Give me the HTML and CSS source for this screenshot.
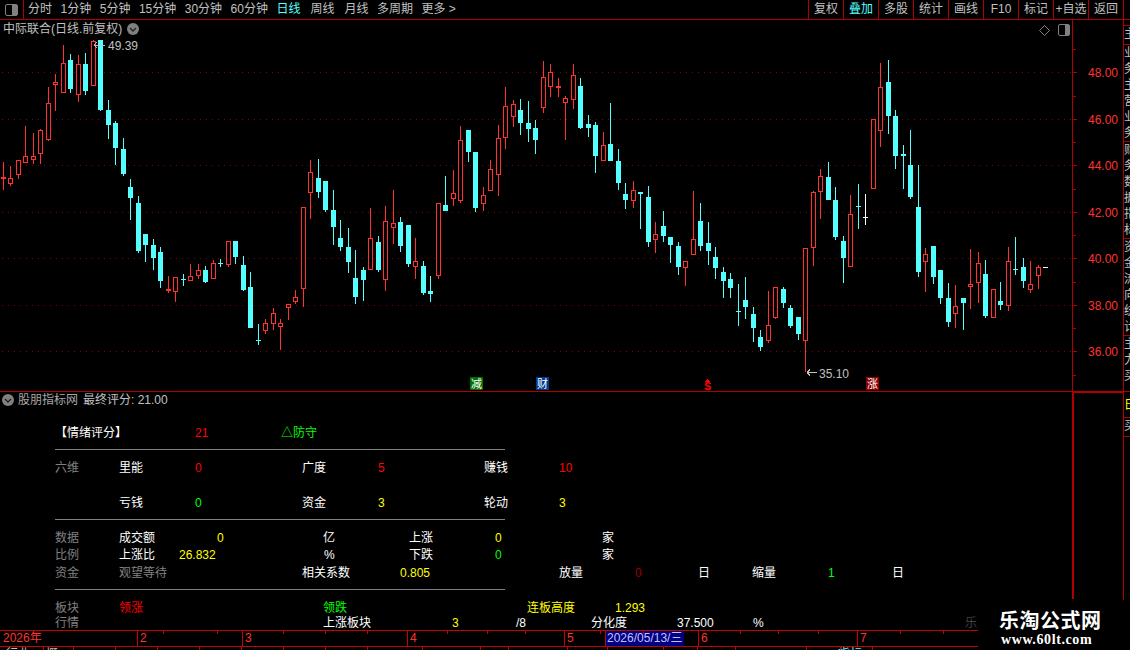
FILE: index.html
```html
<!DOCTYPE html>
<html lang="zh-CN">
<head>
    <meta charset="UTF-8">
    <title>中际联合 日线</title>
    <link rel="stylesheet" href="styles.css">
</head>
<body>
    <div class="screen">
        <div class="toolbar">
            <div class="panel-toggle"><span class="box-icon"></span></div>
            <div class="periods">
                <span>分时</span><span>1分钟</span><span>5分钟</span><span>15分钟</span><span>30分钟</span><span>60分钟</span>
                <span class="on">日线</span><span class="wide">周线</span><span class="wide">月线</span><span>多周期</span><span>更多 &gt;</span>
            </div>
            <div class="actions">
                <span>复权</span><span class="on">叠加</span><span>多股</span><span>统计</span><span>画线</span><span>F10</span><span>标记</span><span>+自选</span><span>返回</span>
            </div>
        </div>

        <div class="workspace">
            <div class="main">
                <div class="price-pane">
                    <div class="pane-title">
                        <span>中际联合(日线.前复权)</span>
                        <svg class="fold-icon" viewBox="0 0 12 12"><circle cx="6" cy="6" r="6" fill="#808080"/><path d="M3 5l3 3 3-3" fill="none" stroke="#222" stroke-width="1.4"/></svg>
                        <span class="pane-tools">
                            <svg class="diamond-icon" viewBox="0 0 11 11"><path d="M5.5 .5l5 5-5 5-5-5z" fill="none" stroke="#808080"/></svg>
                            <span class="box-icon small"></span>
                        </span>
                    </div>
                    <svg id="kline" class="kline" viewBox="0 20 1123 371"></svg>
                </div>

                <div class="indicator-pane">
                    <div class="indicator">
                        <div class="pane-title lower">
                            <svg class="fold-icon first" viewBox="0 0 12 12"><circle cx="6" cy="6" r="6" fill="#808080"/><path d="M3 5l3 3 3-3" fill="none" stroke="#222" stroke-width="1.4"/></svg>
                            <span class="source">股朋指标网</span>
                            <span>最终评分: 21.00</span>
                        </div>

                        <div class="row row-mood">
                            <span class="white">【情绪评分】</span><span class="red">21</span><span class="green">△防守</span>
                        </div>
                        <div class="rule"></div>
                        <div class="row row-six">
                            <span class="muted">六维</span><span class="white">里能</span><span class="red">0</span><span class="white">广度</span><span class="red">5</span><span class="white">赚钱</span><span class="red">10</span>
                        </div>
                        <div class="row row-six gap-wide">
                            <span></span><span class="white">亏钱</span><span class="green">0</span><span class="white">资金</span><span class="yellow">3</span><span class="white">轮动</span><span class="yellow">3</span>
                        </div>
                        <div class="rule"></div>
                        <div class="row row-data">
                            <span class="muted">数据</span><span class="white">成交额</span><span class="yellow">0</span><span class="white">亿</span><span class="white">上涨</span><span class="yellow">0</span><span class="white">家</span>
                        </div>
                        <div class="row row-ratio">
                            <span class="muted">比例</span><span class="white">上涨比</span><span class="yellow">26.832</span><span class="white">%</span><span class="white">下跌</span><span class="green">0</span><span class="white">家</span>
                        </div>
                        <div class="row row-fund">
                            <span class="muted">资金</span><span class="muted">观望等待</span><span class="white">相关系数</span><span class="yellow">0.805</span><span class="white">放量</span><span class="dark-red">0</span><span class="white">日</span><span class="white">缩量</span><span class="green">1</span><span class="white">日</span>
                        </div>
                        <div class="rule"></div>
                        <div class="row row-sector">
                            <span class="muted">板块</span><span class="red">领涨</span><span class="green">领跌</span><span class="yellow">连板高度</span><span class="yellow">1.293</span>
                        </div>
                        <div class="row row-market">
                            <span class="muted">行情</span><span class="white">上涨板块</span><span class="yellow">3</span><span class="white">/8</span><span class="white">分化度</span><span class="white">37.500</span><span class="white">%</span><span class="faint">乐</span>
                        </div>
                    </div>
                    <div class="indicator-axis"></div>
                </div>

                <div class="timeline">
                    <div class="months">
                        <span class="m-year">2026年</span><span class="m-feb">2</span><span class="m-mar">3</span><span class="m-apr">4</span>
                        <span class="m-may">5</span><span class="cursor-date">2026/05/13/三</span><span class="m-jun">6</span><span class="m-jul">7</span>
                    </div>
                    <div class="tabs"><span>行业</span><span>概</span><span class="on">指标</span></div>
                    <svg id="ticks" class="ticks" viewBox="0 0 978 20"></svg>
                </div>
            </div>

            <div class="side">
                <div class="side-cell h6"></div>
                <div class="side-cell h19">主</div>
                <div class="side-cell h97">业务主营业务</div>
                <div class="side-cell h97">财务数据指标</div>
                <div class="side-cell h97">资金流向统计</div>
                <div class="side-cell h56">主力买</div>
                <div class="side-spacer"></div>
                <div class="side-cell h21 note">日</div>
                <div class="side-cell h19">买</div>
            </div>
        </div>

        <div class="watermark">
            <div class="wm-name">乐淘公式网</div>
            <div class="wm-url">www.60lt.com</div>
        </div>
    </div>

    <script src="chart.js"></script>
</body>
</html>
```

FILE: styles.css
```css
* {
    box-sizing: border-box;
}
html, body {
    margin: 0;
    padding: 0;
    background: #000;
}
.screen {
    position: relative;
    width: 1130px;
    height: 650px;
    overflow: hidden;
    background: #000;
    color: #c0c0c0;
    font-family: "Liberation Sans", "Noto Sans CJK SC", sans-serif;
    font-size: 12px;
    line-height: 16px;
}
svg {
    display: block;
}

/* top bar */
.toolbar {
    display: flex;
    height: 20px;
    border-bottom: 1px solid #b00000;
    line-height: 18px;
}
.panel-toggle {
    display: flex;
    align-items: center;
    justify-content: center;
    width: 24px;
    border-right: 1px solid #b00000;
}
.box-icon {
    display: block;
    width: 13px;
    height: 12px;
    border: 1px solid #808080;
    border-radius: 2px;
    background: linear-gradient(to right, #000 55%, #808080 55%);
}
.box-icon.small {
    width: 12px;
}
.periods {
    display: flex;
    gap: 8.5px;
    padding-left: 4px;
}
.periods .wide {
    margin-left: 1.5px;
}
.on {
    color: #54ffff;
}
.actions {
    display: flex;
    margin-left: auto;
    margin-right: 6px;
    border-right: 1px solid #b00000;
}
.actions span {
    width: 35px;
    border-left: 1px solid #b00000;
    text-align: center;
    white-space: nowrap;
}

.workspace {
    display: flex;
    height: 630px;
}
.main {
    width: 1124px;
    border-right: 1px solid #b00000;
}

/* candle pane */
.price-pane {
    position: relative;
    height: 372px;
    border-bottom: 1px solid #b00000;
}
.pane-title {
    display: flex;
    align-items: center;
    height: 18px;
    padding-left: 3px;
}
.pane-tools {
    position: absolute;
    top: 4px;
    left: 1039px;
    display: flex;
    align-items: center;
    gap: 8px;
}
.fold-icon {
    width: 12px;
    height: 12px;
    margin-left: 5px;
}
.fold-icon.first {
    margin: 0 -1px 0 0;
}
.diamond-icon {
    width: 11px;
    height: 11px;
}
.kline {
    position: absolute;
    top: 0;
    left: 0;
    width: 1123px;
    height: 371px;
    shape-rendering: crispEdges;
}
.kline text {
    font-family: "Liberation Sans", sans-serif;
    font-size: 12px;
    shape-rendering: auto;
}
.kline .mark-text {
    font-family: "Noto Sans CJK SC", sans-serif;
    font-size: 11px;
}
.kline .mark-s {
    font-size: 11px;
    font-weight: bold;
}

/* score pane */
.indicator-pane {
    display: flex;
    height: 238px;
}
.indicator {
    width: 1072px;
    padding-left: 55px;
}
.indicator-axis {
    width: 51px;
    height: 208px;
    border-top: 2px solid #b00000;
    border-left: 2px solid #b00000;
    margin-top: -1px;
}
.pane-title.lower {
    gap: 5px;
    height: 16px;
    margin: 0 0 17px -55px;
    padding-left: 2px;
}
.row {
    display: grid;
    height: 16px;
    white-space: nowrap;
}
.row-mood   { grid-template-columns: 140px 86px auto; justify-content: start; }
.row-six    { grid-template-columns: 64px 76px 107px 76px 106px 75px auto; justify-content: start; margin-top: 10px; }
.row-data   { grid-template-columns: 64px 98px 106px 86px 86px 107px auto; justify-content: start; margin-top: 10px; }
.row-ratio  { grid-template-columns: 64px 60px 145px 85px 86px 107px auto; justify-content: start; margin-top: 1px; }
.row-fund   { grid-template-columns: 64px 183px 98px 159px 76px 63px 54px 76px 64px auto; justify-content: start; margin-top: 2px; }
.row-sector { grid-template-columns: 64px 204px 204px 88px auto; justify-content: start; margin-top: 10px; }
.row-market { grid-template-columns: 268px 129px 64px 75px 86px 76px 212px auto; justify-content: start; height: 15px; line-height: 15px; }
.row-six.gap-wide {
    margin-top: 19px;
}
.rule {
    height: 1px;
    width: 450px;
    margin-top: 8px;
    background: #808080;
}
.white { color: #fff; }
.source { color: #a8a8a8; }
.muted { color: #808080; }
.red { color: #ff0000; }
.dark-red { color: #a00000; }
.green { color: #00ff00; }
.yellow { color: #ffff00; }
.faint { color: #404040; }

/* date ruler */
.timeline {
    position: relative;
    height: 20px;
    border-top: 1px solid #c80000;
    color: #ff3232;
}
.months {
    display: flex;
    height: 16px;
    border-bottom: 1px solid #c80000;
    line-height: 15px;
}
.months span {
    padding-left: 2px;
    border-left: 1px solid #c80000;
}
.months .m-year { width: 137px; padding-left: 3px; border-left: 0; }
.months .m-feb { width: 105px; }
.months .m-mar { width: 165px; }
.months .m-apr { width: 157px; }
.months .m-may { width: 41px; }
.months .cursor-date {
    width: 94px;
    padding-left: 1px;
    border-right: 1px solid #c80000;
    background: linear-gradient(to right, #000080 78px, #000 78px);
    color: #c0c0ff;
}
.months .m-jun { width: 158px; border-left: 0; }
.months .m-jul { width: 100px; }
.tabs {
    display: flex;
    gap: 16px;
    padding-left: 6px;
    line-height: 15px;
    color: #c0c0c0;
}
.tabs .on {
    margin-left: 764px;
    color: #54ffff;
}
.ticks {
    position: absolute;
    top: -1px;
    left: 0;
    width: 978px;
    height: 20px;
    shape-rendering: crispEdges;
}

/* clipped column on the far right */
.side {
    width: 6px;
    overflow: hidden;
}
.side-cell {
    width: 12px;
    overflow: hidden;
    border-bottom: 1px solid #b00000;
    line-height: 16px;
    word-break: break-all;
}
.side-cell.note {
    color: #ffff00;
}
.side-spacer { height: 5px; }
.h6 { height: 6px; }
.h19 { height: 19px; }
.h21 { height: 21px; }
.h56 { height: 56px; }
.h97 { height: 97px; }

/* site stamp over the corner */
.watermark {
    position: absolute;
    left: 978px;
    top: 600px;
    width: 152px;
    height: 50px;
    padding: 8px 0 0 21px;
    background: #000;
    color: #fff;
}
.wm-name {
    font-family: "Noto Sans CJK SC", sans-serif;
    font-size: 20px;
    font-weight: bold;
    line-height: 24px;
    letter-spacing: .5px;
}
.wm-url {
    font-family: "Liberation Serif", serif;
    font-size: 14px;
    font-weight: bold;
    line-height: 16px;
    letter-spacing: .6px;
    margin-left: 2px;
}
```

FILE: chart.js
```js
// hi, body top, body bottom, lo, colour (r red, c cyan, w white) - one entry per trading day, in page pixels
const candles = [
    [162,177,179,190,'r'],[166,178,184,186,'r'],[160,160,175,179,'r'],[126,156,163,163,'r'],[133,156,160,164,'r'],
    [129,130,154,164,'r'],[87,103,140,141,'r'],[74,82,85,111,'r'],[45,63,93,93,'r'],[54,60,89,93,'c'],
    [55,64,95,102,'r'],[53,64,91,95,'c'],[40,41,86,86,'r'],[40,40,110,111,'c'],[100,110,125,139,'c'],
    [121,123,148,165,'c'],[138,149,174,176,'c'],[179,187,198,220,'c'],[196,203,251,253,'c'],[234,234,245,262,'c'],
    [239,245,258,270,'c'],[247,252,281,288,'c'],[276,289,291,293,'r'],[277,277,292,302,'r'],[274,279,280,286,'c'],
    [264,276,281,281,'r'],[264,270,276,279,'r'],[266,270,282,283,'c'],[260,263,279,279,'r'],[259,263,264,267,'c'],
    [241,241,265,267,'r'],[241,241,257,264,'c'],[256,265,290,291,'c'],[272,287,328,328,'c'],[324,340,341,345,'c'],
    [319,323,331,334,'r'],[308,313,324,330,'r'],[319,323,327,350,'r'],[304,304,308,320,'r'],[290,297,302,304,'r'],
    [207,207,289,307,'r'],[160,172,193,219,'r'],[159,178,192,198,'c'],[181,181,210,212,'c'],[190,210,227,245,'c'],
    [220,238,247,251,'c'],[228,247,262,273,'c'],[250,278,297,304,'c'],[267,270,280,301,'c'],[208,238,270,270,'r'],
    [236,242,270,272,'c'],[206,221,280,291,'r'],[190,223,228,244,'r'],[217,222,246,252,'c'],[225,225,264,267,'c'],
    [238,261,267,279,'r'],[261,266,293,295,'c'],[276,291,294,302,'c'],[203,203,276,279,'r'],[176,205,211,211,'c'],
    [170,193,199,206,'r'],[126,140,201,203,'r'],[130,130,152,162,'c'],[152,152,208,212,'c'],[187,195,204,211,'r'],
    [160,169,191,191,'r'],[125,138,175,196,'r'],[87,106,138,149,'r'],[100,104,117,127,'r'],[99,110,123,135,'c'],
    [101,123,129,142,'c'],[120,128,140,154,'c'],[61,77,108,113,'r'],[64,72,87,97,'r'],[78,86,88,97,'r'],
    [96,98,103,140,'r'],[64,75,100,109,'r'],[78,86,128,129,'c'],[115,124,128,137,'c'],[122,125,156,173,'c'],
    [132,145,161,161,'r'],[103,144,161,161,'c'],[149,161,183,190,'c'],[183,194,200,209,'c'],[181,190,201,208,'r'],
    [192,192,194,229,'c'],[186,197,242,247,'c'],[222,234,240,253,'r'],[211,226,236,242,'c'],[237,237,245,263,'c'],
    [242,246,267,275,'c'],[261,261,268,286,'r'],[191,239,255,255,'r'],[203,221,246,251,'c'],[222,243,251,265,'c'],
    [247,257,268,279,'c'],[267,272,281,298,'c'],[273,279,288,298,'c'],[284,311,312,326,'c'],[277,300,307,319,'c'],
    [307,314,328,342,'c'],[330,337,347,351,'c'],[291,325,341,343,'r'],[287,287,318,319,'r'],[287,289,303,308,'c'],
    [305,308,326,328,'c'],[317,317,334,340,'c'],[248,248,341,372,'r'],[191,192,248,266,'r'],[169,176,192,219,'r'],
    [162,177,200,200,'c'],[187,200,237,240,'c'],[236,241,258,283,'c'],[195,214,267,267,'r'],[184,206,207,229,'c'],
    [194,217,218,225,'w'],[119,119,189,189,'r'],[63,87,131,147,'r'],[60,82,116,134,'c'],[110,116,156,169,'c'],
    [145,154,156,189,'c'],[130,165,197,199,'c'],[165,207,272,277,'c'],[248,254,262,292,'r'],[246,246,277,284,'c'],
    [270,270,298,304,'c'],[283,298,322,327,'c'],[285,306,314,328,'r'],[298,298,303,330,'c'],[249,284,287,309,'r'],
    [252,263,283,303,'r'],[260,274,316,318,'c'],[289,289,318,318,'r'],[282,301,305,310,'c'],[247,261,306,311,'r'],
    [237,269,270,275,'c'],[258,267,281,288,'c'],[261,284,290,293,'r'],[265,267,276,289,'r'],[267,267,268,268,'w']
];

const colours = { r: '#ff3232', c: '#54ffff', w: '#ffffff' };
const gridLines = [[72,'48.00'],[119,'46.00'],[165,'44.00'],[212,'42.00'],[258,'40.00'],[305,'38.00'],[351,'36.00']];
const minorTicks = [49,96,142,189,235,282,328,375];

function rect(x, y, w, h, fill) {
    return `<rect x="${x}" y="${y}" width="${w}" height="${h}" fill="${fill}"/>`;
}

function drawCandle(c, i) {
    const x = Math.floor(3.3 + i * 7.5);
    const [hi, top, bot, lo, tone] = c;
    const col = colours[tone];
    let s = rect(x, hi, 1, lo - hi, col);
    if (tone === 'r' && bot - top > 2) {
        s += `<rect x="${x - 1.5}" y="${top + 0.5}" width="4" height="${bot - top - 1}" fill="#000" stroke="${col}"/>`;
    } else {
        s += rect(x - 2, top, 5, Math.max(bot - top, 1), col);
    }
    return s;
}

function drawChart() {
    let s = '';
    gridLines.forEach(([y, label]) => {
        s += `<line x1="2" y1="${y + 0.5}" x2="1072" y2="${y + 0.5}" stroke="#800000" stroke-dasharray="1 5"/>`;
        s += rect(1073, y, 4, 1, '#b00000');
        s += `<text x="1088" y="${y + 5}" fill="#ff3232">${label}</text>`;
    });
    minorTicks.forEach(y => { s += rect(1073, y, 3, 1, '#b00000'); });
    s += rect(1072, 20, 1, 371, '#b00000');

    s += candles.map(drawCandle).join('');

    // high and low callouts
    s += `<path d="M94 45h11M94 45l3-3M94 45l3 3" fill="none" stroke="#c0c0c0"/>`;
    s += `<text x="108" y="50" fill="#c0c0c0">49.39</text>`;
    s += `<path d="M807 372.5h10M807 372.5l3-3M807 372.5l3 3" fill="none" stroke="#c0c0c0"/>`;
    s += `<text x="819" y="378" fill="#c0c0c0">35.10</text>`;

    // event markers along the bottom
    s += rect(470, 377, 13, 13, '#007000') + `<text class="mark-text" x="471" y="388" fill="#fff">减</text>`;
    s += rect(536, 377, 13, 13, '#003a8c') + `<text class="mark-text" x="537" y="388" fill="#fff">财</text>`;
    s += `<path d="M707 379l3 3h-6z" fill="#ff0000"/>`;
    s += `<text class="mark-s" x="704" y="390" fill="#ff0000">S</text>`;
    s += rect(866, 377, 13, 13, '#8c0000') + `<text class="mark-text" x="867" y="388" fill="#fff">涨</text>`;

    document.getElementById('kline').innerHTML = s;
}

function drawTicks() {
    const upper = [163,217,283,325,367,447,487,525,600,643,740,778,818,900,943];
    const lower = [43,73,115,157,199,241,283,325,367,422,480,508,567,607,663,697,735,806,840,872];
    let s = '';
    upper.forEach(x => { s += rect(x, 1, 1, 3, '#c80000'); });
    lower.forEach(x => { s += rect(x, 17, 1, 3, '#c80000'); });
    document.getElementById('ticks').innerHTML = s;
}

drawChart();
drawTicks();
```
